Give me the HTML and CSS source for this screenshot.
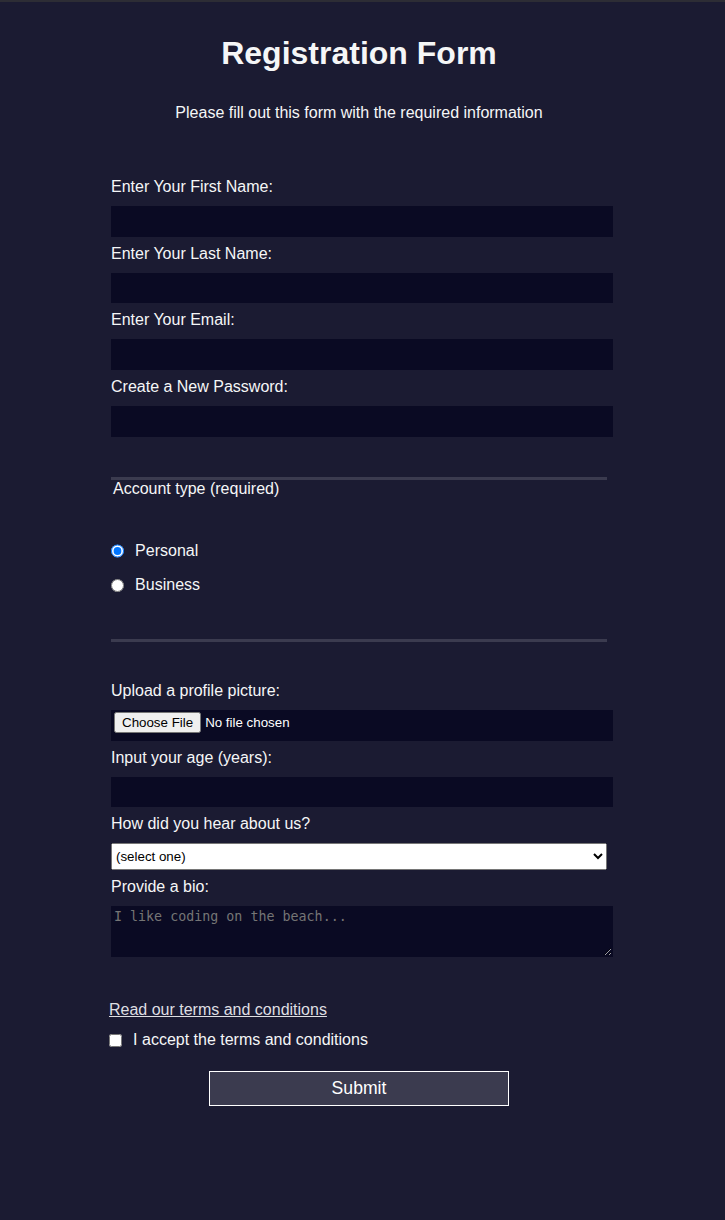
FILE: index.html
```html
<!DOCTYPE html>
<html lang="en">
<head>
  <meta charset="UTF-8">
  <meta name="viewport" content="width=device-width, initial-scale=1.0">
  <title>Registration Form</title>
  <link rel="stylesheet" href="styles.css">
</head>
<body>
  <h1>Registration Form</h1>
  <p>Please fill out this form with the required information</p>
  <form method="post" action="#">
    <fieldset>
      <label for="first-name">Enter Your First Name: <input id="first-name" name="first-name" type="text" required></label>
      <label for="last-name">Enter Your Last Name: <input id="last-name" name="last-name" type="text" required></label>
      <label for="email">Enter Your Email: <input id="email" name="email" type="email" required></label>
      <label for="new-password">Create a New Password: <input id="new-password" name="new-password" type="password" pattern="[a-z0-5]{8,}" required></label>
    </fieldset>
    <fieldset>
      <legend>Account type (required)</legend>
      <label for="personal-account"><input id="personal-account" type="radio" name="account-type" class="inline" checked> Personal</label>
      <label for="business-account"><input id="business-account" type="radio" name="account-type" class="inline"> Business</label>
    </fieldset>
    <fieldset>
      <label for="profile-picture">Upload a profile picture: <input id="profile-picture" type="file" name="file"></label>
      <label for="age">Input your age (years): <input id="age" type="number" name="age" min="13" max="120"></label>
      <label for="referrer">How did you hear about us?
        <select id="referrer" name="referrer">
          <option value="">(select one)</option>
          <option value="1">freeCodeCamp News</option>
          <option value="2">freeCodeCamp YouTube Channel</option>
          <option value="3">freeCodeCamp Forum</option>
          <option value="4">Other</option>
        </select>
      </label>
      <label for="bio">Provide a bio:
        <textarea id="bio" name="bio" rows="3" cols="30" placeholder="I like coding on the beach..."></textarea>
      </label>
    </fieldset>
    <div class="terms-link"><a href="#">Read our terms and conditions</a></div>
    <label for="terms-and-conditions" class="terms"><input class="inline" id="terms-and-conditions" type="checkbox" required name="terms-and-conditions"> I accept the terms and conditions</label>
    <input type="submit" value="Submit">
  </form>
</body>
</html>
```

FILE: styles.css
```css
body {
  margin: 0;
  padding: 0 7px 0 0;
  border-top: 2px solid #2d2d35;
  min-height: 100vh;
  background-color: #1b1b32;
  color: #f5f6f7;
  font-family: "Liberation Sans", Arial, sans-serif;
  font-size: 16px;
}

h1, p {
  margin: 1em auto;
  text-align: center;
}

h1 {
  padding-top: 1px;
}

form {
  width: 500px;
  margin: 0 auto;
  padding-bottom: 2em;
}

fieldset {
  border: none;
  padding: 2rem 0;
  border-bottom: 3px solid #3b3b4f;
}

fieldset:last-of-type {
  border-bottom: none;
}

label {
  display: block;
  margin: 0.5rem 0;
}

input,
textarea,
select {
  margin: 10px 0 0 0;
  width: 100%;
  min-height: 2em;
  font-family: "Liberation Sans", Arial, sans-serif;
  font-size: 13.333px;
}

input, textarea {
  background-color: #0a0a23;
  border: 1px solid #0a0a23;
  color: #ffffff;
}

textarea {
  font-family: "DejaVu Sans Mono", monospace;
}

.inline {
  width: unset;
  margin: 0 0.5em 0 0;
  vertical-align: middle;
}

input[type="submit"] {
  display: block;
  width: 60%;
  margin: 1em auto;
  height: 2em;
  font-size: 1.1rem;
  background-color: #3b3b4f;
  border-color: white;
  min-width: 300px;
}

input[type="file"] {
  padding: 1px 2px;
}

.terms-link {
  margin: 0 0 8px;
}

a {
  color: #dfdfe2;
}
```
